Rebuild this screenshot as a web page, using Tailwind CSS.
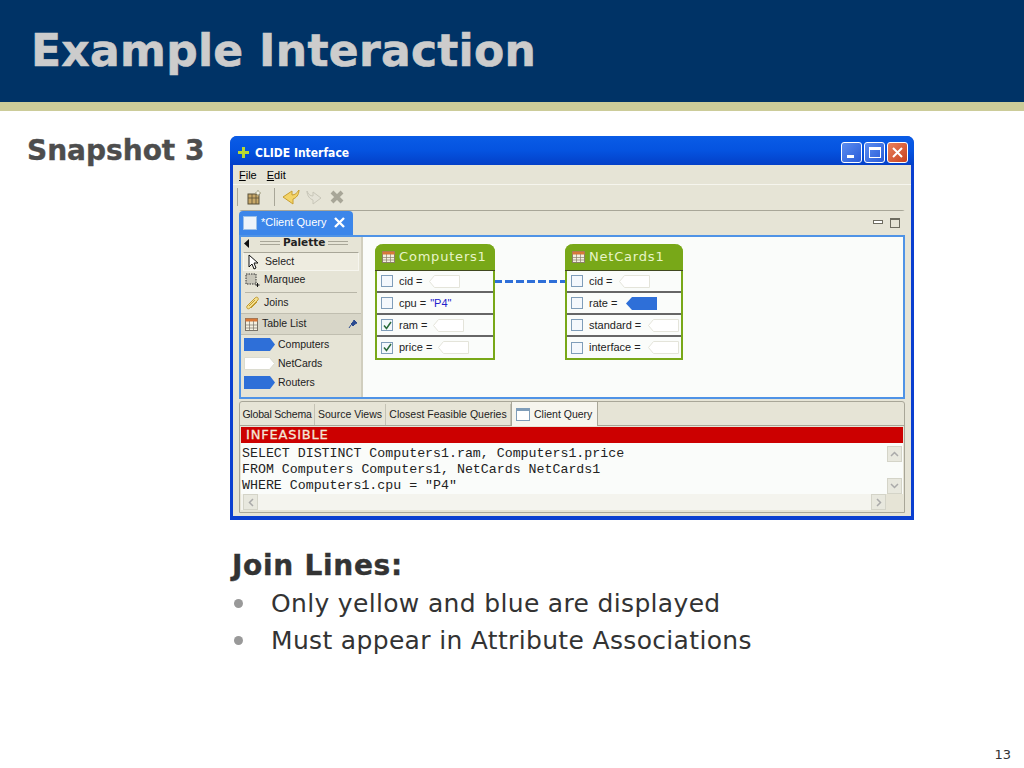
<!DOCTYPE html>
<html lang="en">
<head>
<meta charset="UTF-8">
<title>Example Interaction</title>
<script src="https://cdn.jsdelivr.net/npm/@tailwindcss/browser@4"></script>
</head>
<body class="bg-white">
<div class="w-[1024px] h-[768px] overflow-hidden relative font-['DejaVu_Sans',sans-serif] bg-white">
  <!-- Header -->
  <header class="h-[111px] bg-[#003366] border-b-[9px] border-[#cccc99] pl-[31px] pt-[24px]">
    <h1 class="text-[44px] leading-[54px] font-bold text-[#cccccc] tracking-[0.3px] [-webkit-text-stroke:0.6px_#cccccc]">Example Interaction</h1>
  </header>

  <div class="flex">
    <div class="w-[230px] pl-[27px] pt-[22px] text-[28px] leading-[36px] font-bold text-[#4d4d4d] whitespace-nowrap [-webkit-text-stroke:0.4px_#4d4d4d]">Snapshot 3</div>

    <div class="pt-[25px]">
      <!-- CLIDE window -->
      <div class="w-[684px] h-[384px] flex flex-col rounded-t-[7px] bg-[#0a3fd0] px-[3px] pb-[4px] font-['Liberation_Sans',sans-serif]">
        <!-- Title bar -->
        <div class="h-[29px] flex items-center -mx-[3px] pl-[7px] pr-[6px] pt-[4px] rounded-t-[7px] bg-gradient-to-b from-[#0a5ce6] via-[#0553e0] to-[#0440c8] shrink-0">
          <svg width="13" height="13" viewBox="0 0 13 13"><path d="M5 1h3v4h4v3H8v4H5V8H1V5h4z" fill="#b8d832"/></svg>
          <span class="ml-[5px] text-[12px] font-bold text-white font-['DejaVu_Sans_Condensed','DejaVu_Sans',sans-serif]">CLIDE Interface</span>
          <div class="ml-auto flex gap-[2px]">
            <div class="w-[21px] h-[21px] rounded-[3px] border border-white bg-gradient-to-br from-[#5c8df0] to-[#2a5bd8] flex items-end pl-[5px] pb-[4px]"><div class="w-[7px] h-[3px] bg-white"></div></div>
            <div class="w-[21px] h-[21px] rounded-[3px] border border-white bg-gradient-to-br from-[#5c8df0] to-[#2a5bd8] flex items-center justify-center"><div class="w-[12px] h-[11px] border border-white border-t-[3px]"></div></div>
            <div class="w-[21px] h-[21px] rounded-[3px] border border-white bg-gradient-to-br from-[#e8805c] to-[#c8401c] flex items-center justify-center">
              <svg width="13" height="13" viewBox="0 0 13 13"><path d="M2 2l9 9M11 2l-9 9" stroke="#fff" stroke-width="2"/></svg>
            </div>
          </div>
        </div>

        <div class="flex-1 min-h-0 flex flex-col bg-[#e6e4d6]">
          <!-- Menu -->
          <div class="h-[20px] pt-[1px] flex items-center gap-[10px] pl-[6px] text-[11px] text-black border-b border-[#f6f5ee] shrink-0">
            <span><u>F</u>ile</span><span><u>E</u>dit</span>
          </div>
          <!-- Toolbar -->
          <div class="h-[25px] pb-[1px] flex items-center pl-[4px] shrink-0">
            <div class="w-[2px] h-[18px] border-l border-[#a8a698]"></div>
            <svg class="ml-[8px]" width="15" height="15" viewBox="0 0 15 15"><rect x="1" y="4" width="11" height="10" fill="#c8a868" stroke="#5a5038"/><path d="M1 8h11M5 4v10M9 4v10" stroke="#5a5038" stroke-width=".8"/><path d="M11 0l1 2 2 1-2 1-1 2-1-2-2-1 2-1z" fill="#f4f2e4" stroke="#8a8868" stroke-width=".5"/></svg>
            <div class="ml-[12px] w-[1px] h-[18px] bg-[#a8a698]"></div>
            <svg class="ml-[7px]" width="18" height="16" viewBox="0 0 18 16"><path d="M17 1C17 6 14 9 11 10V15L1 8 10 2V6C13 6 15 4 17 1z" fill="#f4d468" stroke="#c89e30"/></svg>
            <svg class="ml-[6px]" width="16" height="15" viewBox="0 0 16 15"><path d="M1 1C1 6 4 9 7 10V14L15 8 7 2V6C4 6 2 4 1 1z" fill="#e4e2d6" stroke="#c8c6b8"/></svg>
            <svg class="ml-[8px]" width="14" height="14" viewBox="0 0 14 14"><path d="M2 2l10 10M12 2L2 12" stroke="#a8a698" stroke-width="4"/></svg>
          </div>

          <!-- Editor panel -->
          <div class="mx-[6px] h-[189px] flex flex-col shrink-0 border-t border-[#a8a698] rounded-t-[3px] relative">
            <div class="h-[24px] flex shrink-0 bg-[#e6e4d6]">
              <div class="w-[114px] h-[24px] pb-[1px] rounded-t-[4px] bg-[#3c86ea] flex items-center pl-[4px] text-[11px] text-white">
                <div class="w-[14px] h-[14px] bg-[#eef4fa] border border-[#9cc0e8]"></div>
                <span class="ml-[4px] whitespace-nowrap">*Client Query</span>
                <svg class="ml-[8px]" width="11" height="11" viewBox="0 0 11 11"><path d="M1 1l9 9M10 1L1 10" stroke="#fff" stroke-width="2.400"/></svg>
              </div>
              <div class="ml-auto mr-[5px] flex items-center gap-[7px]">
                <div class="w-[10px] h-[4px] -mt-[3px] border border-[#6e6c60] bg-white"></div>
                <div class="w-[10px] h-[10px] border border-[#6e6c60] border-t-[2px]"></div>
              </div>
            </div>
            <div class="flex-1 min-h-0 flex border-[2px] border-[#4f93e6] bg-[#fafcfa]">
              <!-- Palette -->
              <div class="w-[122px] bg-[#e6e4d6] border-r-[2px] border-[#d0cebe] text-[10.5px] text-[#222] shrink-0">
                <div class="h-[15px] pb-[3px] flex items-center pl-[2px] gap-[3px] font-bold">
                  <svg width="7" height="9" viewBox="0 0 7 9"><path d="M6 0v9L1 4.500z" fill="#111"/></svg>
                  <div class="ml-[7px] w-[20px] h-[4px] border-y border-[#a8a698]"></div>
                  <span class="font-['DejaVu_Sans',sans-serif] text-[10.5px]">Palette</span>
                  <div class="w-[20px] h-[4px] border-y border-[#a8a698]"></div>
                </div>
                <div class="mx-[2px] h-[19px] flex items-center border border-[#f6f5ee] border-t-[#a8a698] bg-[#eeece0] pl-[4px]">
                  <svg width="12" height="16" viewBox="0 0 12 16"><path d="M1 1v12l3-3 2 5 2-1-2-5h4z" fill="#fff" stroke="#111"/></svg>
                  <span class="ml-[5px]">Select</span>
                </div>
                <div class="mx-[2px] h-[18px] flex items-center pl-[2px]">
                  <svg width="15" height="15" viewBox="0 0 15 15"><rect x="1" y="1" width="10" height="10" fill="#c8c6ba" stroke="#333" stroke-dasharray="1.500 1"/><path d="M12.500 10v4M10.500 12h4" stroke="#111"/></svg>
                  <span class="ml-[4px]">Marquee</span>
                </div>
                <div class="mx-[4px] mt-[3px] h-[1px] bg-[#b8b6a8]"></div>
                <div class="mx-[2px] h-[20px] flex items-center pl-[2px]">
                  <svg width="16" height="16" viewBox="0 0 16 16"><path d="M2 11L10 3c2-2 4 0 3 2l-8 8c-2 2-4 0-3-2z" fill="#f4e090" stroke="#c09a30"/><path d="M4 11l6-6M6 13l6-6" stroke="#c09a30"/></svg>
                  <span class="ml-[3px]">Joins</span>
                </div>
                <div class="h-[22px] flex items-center bg-[#d8d6c8] border-y border-[#c0beb0] pl-[4px]">
                  <svg width="13" height="13" viewBox="0 0 13 13"><rect x=".5" y=".5" width="12" height="12" fill="#f4f0e0" stroke="#7a7468"/><rect x=".5" y=".5" width="12" height="3" fill="#d87838"/><path d="M.5 7h12M.5 10h12M4.500 3v10M8.500 3v10" stroke="#7a7468" stroke-width=".7"/></svg>
                  <span class="ml-[4px]">Table List</span>
                  <svg class="ml-auto mr-[3px]" width="10" height="10" viewBox="0 0 10 10"><path d="M6 1l3 3-2 1-2 2-2-2 2-2zM3 6L1 9" fill="#2a4a90" stroke="#2a4a90"/></svg>
                </div>
                <div class="flex flex-col gap-[6px] pt-[3px] pl-[3px]">
                  <div class="h-[13px] flex items-center">
                    <svg width="31" height="13" viewBox="0 0 31 13"><path d="M0 0h26l5 6.500-5 6.500H0z" fill="#2e6fd8"/></svg><span class="ml-[3px]">Computers</span>
                  </div>
                  <div class="h-[13px] flex items-center">
                    <svg width="31" height="13" viewBox="0 0 31 13"><path d="M.5.5h25l5 6-5 6H.5z" fill="#fff" stroke="#dcdcd0"/></svg><span class="ml-[3px]">NetCards</span>
                  </div>
                  <div class="h-[13px] flex items-center">
                    <svg width="31" height="13" viewBox="0 0 31 13"><path d="M0 0h26l5 6.500-5 6.500H0z" fill="#2e6fd8"/></svg><span class="ml-[3px]">Routers</span>
                  </div>
                </div>
              </div>
              <!-- Diagram canvas -->
              <div class="relative flex-1 text-[11px] text-[#222]">
                <svg class="absolute left-[131px] top-[43px]" width="72" height="3" viewBox="0 0 72 3"><path d="M0 1.500h72" stroke="#2e6fd8" stroke-width="3" stroke-dasharray="8 3"/></svg>

                <div class="absolute left-[12px] top-[7px] w-[120px] rounded-t-[8px] border-[2px] border-t-0 border-[#78a818] bg-[#fafcfa]">
                  <div class="h-[27px] pb-[1px] -mx-[2px] rounded-t-[8px] bg-[#78a818] flex items-center pl-[7px] text-[13px] tracking-[0.8px] font-['DejaVu_Sans',sans-serif] text-[#e8f4c8] border-b border-[#404820]">
                    <svg width="13" height="12" viewBox="0 0 13 12"><rect x=".5" y=".5" width="12" height="11" fill="#f4f0e0" stroke="#8a8068"/><rect x=".5" y=".5" width="12" height="3" fill="#d87838"/><path d="M.5 6.500h12M.5 9h12M4.500 3v9M8.500 3v9" stroke="#8a8068" stroke-width=".7"/></svg>
                    <span class="ml-[4px]">Computers1</span>
                  </div>
                  <div class="h-[22px] flex items-center pl-[4px] border-b-[2px] border-[#666]">
                    <div class="w-[12px] h-[12px] border border-[#7f9db9] bg-[#f4f8fc]"></div><span class="ml-[6px]">cid =</span>
                    <svg class="ml-[6px]" width="31" height="13" viewBox="0 0 31 13"><path d="M30.500.5h-25l-5 6 5 6h25z" fill="#fff" stroke="#e4e4da"/></svg>
                  </div>
                  <div class="h-[22px] flex items-center pl-[4px] border-b-[2px] border-[#666]">
                    <div class="w-[12px] h-[12px] border border-[#7f9db9] bg-[#f4f8fc]"></div><span class="ml-[6px]">cpu =</span><span class="ml-[4px] text-[#2222cc]">"P4"</span>
                  </div>
                  <div class="h-[22px] flex items-center pl-[4px] border-b-[2px] border-[#666]">
                    <div class="w-[12px] h-[12px] border border-[#7f9db9] bg-[#f4f8fc] flex items-center justify-center"><svg width="9" height="9" viewBox="0 0 9 9"><path d="M1 4.500l2.500 3L8 1" stroke="#2a6a3a" stroke-width="1.500" fill="none"/></svg></div><span class="ml-[6px]">ram =</span>
                    <svg class="ml-[6px]" width="31" height="13" viewBox="0 0 31 13"><path d="M30.500.5h-25l-5 6 5 6h25z" fill="#fff" stroke="#e4e4da"/></svg>
                  </div>
                  <div class="h-[21px] flex items-center pl-[4px]">
                    <div class="w-[12px] h-[12px] border border-[#7f9db9] bg-[#f4f8fc] flex items-center justify-center"><svg width="9" height="9" viewBox="0 0 9 9"><path d="M1 4.500l2.500 3L8 1" stroke="#2a6a3a" stroke-width="1.500" fill="none"/></svg></div><span class="ml-[6px]">price =</span>
                    <svg class="ml-[6px]" width="31" height="13" viewBox="0 0 31 13"><path d="M30.500.5h-25l-5 6 5 6h25z" fill="#fff" stroke="#e4e4da"/></svg>
                  </div>
                </div>

                <div class="absolute left-[202px] top-[7px] w-[118px] rounded-t-[8px] border-[2px] border-t-0 border-[#78a818] bg-[#fafcfa]">
                  <div class="h-[27px] pb-[1px] -mx-[2px] rounded-t-[8px] bg-[#78a818] flex items-center pl-[7px] text-[13px] tracking-[0.8px] font-['DejaVu_Sans',sans-serif] text-[#e8f4c8] border-b border-[#404820]">
                    <svg width="13" height="12" viewBox="0 0 13 12"><rect x=".5" y=".5" width="12" height="11" fill="#f4f0e0" stroke="#8a8068"/><rect x=".5" y=".5" width="12" height="3" fill="#d87838"/><path d="M.5 6.500h12M.5 9h12M4.500 3v9M8.500 3v9" stroke="#8a8068" stroke-width=".7"/></svg>
                    <span class="ml-[4px]">NetCards1</span>
                  </div>
                  <div class="h-[22px] flex items-center pl-[4px] border-b-[2px] border-[#666]">
                    <div class="w-[12px] h-[12px] border border-[#7f9db9] bg-[#f4f8fc]"></div><span class="ml-[6px]">cid =</span>
                    <svg class="ml-[6px]" width="31" height="13" viewBox="0 0 31 13"><path d="M30.500.5h-25l-5 6 5 6h25z" fill="#fff" stroke="#e4e4da"/></svg>
                  </div>
                  <div class="h-[22px] flex items-center pl-[4px] border-b-[2px] border-[#666]">
                    <div class="w-[12px] h-[12px] border border-[#7f9db9] bg-[#f4f8fc]"></div><span class="ml-[6px]">rate =</span>
                    <svg class="ml-[9px]" width="31" height="13" viewBox="0 0 31 13"><path d="M31 0H6L0 6.500 6 13h25z" fill="#2e6fd8"/></svg>
                  </div>
                  <div class="h-[22px] flex items-center pl-[4px] border-b-[2px] border-[#666] whitespace-nowrap">
                    <div class="w-[12px] h-[12px] border border-[#7f9db9] bg-[#f4f8fc]"></div><span class="ml-[6px]">standard =</span>
                    <svg class="ml-[7px]" width="31" height="13" viewBox="0 0 31 13"><path d="M30.500.5h-25l-5 6 5 6h25z" fill="#fff" stroke="#e4e4da"/></svg>
                  </div>
                  <div class="h-[21px] flex items-center pl-[4px] whitespace-nowrap">
                    <div class="w-[12px] h-[12px] border border-[#7f9db9] bg-[#f4f8fc]"></div><span class="ml-[6px]">interface =</span>
                    <svg class="ml-[7px]" width="31" height="13" viewBox="0 0 31 13"><path d="M30.500.5h-25l-5 6 5 6h25z" fill="#fff" stroke="#e4e4da"/></svg>
                  </div>
                </div>
              </div>
            </div>
          </div>

          <!-- Bottom panel -->
          <div class="mx-[6px] mt-[2px] flex-1 min-h-0 flex flex-col border border-[#a8a698] rounded-t-[3px]">
            <div class="h-[24px] pt-[2px] flex shrink-0 text-[10.5px] text-[#222] border-b border-[#a8a698] whitespace-nowrap">
              <div class="w-[75px] flex items-center justify-center border-r border-[#c4c2b4] tracking-[-0.2px]">Global Schema</div>
              <div class="w-[71px] flex items-center justify-center border-r border-[#c4c2b4]">Source Views</div>
              <div class="w-[125px] flex items-center justify-center border-r border-[#c4c2b4]">Closest Feasible Queries</div>
              <div class="w-[87px] h-[24px] -mt-[2px] flex items-center pl-[4px] pt-[1px] bg-[#f6f5ee] border-x border-[#a8a698]">
                <div class="w-[14px] h-[13px] border border-[#7f9db9] border-t-[3px] bg-white"></div><span class="ml-[4px]">Client Query</span>
              </div>
            </div>
            <div class="flex-1 min-h-0 flex flex-col px-[1px] pt-[1px]">
              <div class="h-[16px] bg-[#cc0000] text-[#f4e8d8] text-[13px] font-['DejaVu_Sans',sans-serif] pl-[5px] leading-[16px] tracking-[0.8px] [-webkit-text-stroke:0.3px_#f4e8d8] shrink-0">INFEASIBLE</div>
              <div class="flex h-[51px] shrink-0 bg-[#fafcfa]">
                <div class="flex-1 font-['Liberation_Mono',monospace] text-[13.27px] leading-[16px] pl-[1px] pt-[3px] text-[#222] whitespace-pre">SELECT DISTINCT Computers1.ram, Computers1.price
FROM Computers Computers1, NetCards NetCards1
WHERE Computers1.cpu = "P4"</div>
                <div class="w-[15px] mr-[1px] pt-[3px] flex flex-col justify-between">
                  <div class="h-[16px] bg-[#e8e8de] border border-[#d4d4c8] flex items-center justify-center"><svg width="9" height="6" viewBox="0 0 9 6"><path d="M1 5l3.500-3.500L8 5" stroke="#aaa" stroke-width="1.500" fill="none"/></svg></div>
                  <div class="h-[16px] bg-[#e8e8de] border border-[#d4d4c8] flex items-center justify-center"><svg width="9" height="6" viewBox="0 0 9 6"><path d="M1 1l3.500 3.500L8 1" stroke="#aaa" stroke-width="1.500" fill="none"/></svg></div>
                </div>
              </div>
              <div class="h-[16px] pl-[2px] mr-[17px] flex justify-between bg-[#f4f4ee] shrink-0">
                <div class="w-[15px] bg-[#e8e8de] border border-[#d4d4c8] flex items-center justify-center"><svg width="6" height="9" viewBox="0 0 6 9"><path d="M5 1L1.500 4.500 5 8" stroke="#aaa" stroke-width="1.500" fill="none"/></svg></div>
                <div class="w-[15px] bg-[#e8e8de] border border-[#d4d4c8] flex items-center justify-center"><svg width="6" height="9" viewBox="0 0 6 9"><path d="M1 1l3.500 3.500L1 8" stroke="#aaa" stroke-width="1.500" fill="none"/></svg></div>
              </div>
            </div>
          </div>
          <div class="h-[3px] shrink-0"></div>
        </div>
      </div>

      <!-- Notes -->
      <div class="pl-[2px] pt-[28px]">
        <h2 class="text-[28px] leading-[36px] font-bold text-[#333333] tracking-[0.7px] [-webkit-text-stroke:0.4px_#333333]">Join Lines:</h2>
        <ul class="mt-[1px] text-[25px] leading-[37px] text-[#333333] tracking-[0.33px]">
          <li class="flex items-center pl-[2px]"><span class="w-[9px] h-[9px] rounded-full bg-[#999999] mr-[28px]"></span>Only yellow and blue are displayed</li>
          <li class="flex items-center pl-[2px]"><span class="w-[9px] h-[9px] rounded-full bg-[#999999] mr-[28px]"></span>Must appear in Attribute Associations</li>
        </ul>
      </div>
    </div>
  </div>

  <div class="absolute right-[13px] top-[748px] text-[13px] leading-[14px] text-[#333333]">13</div>
</div>
</body>
</html>
